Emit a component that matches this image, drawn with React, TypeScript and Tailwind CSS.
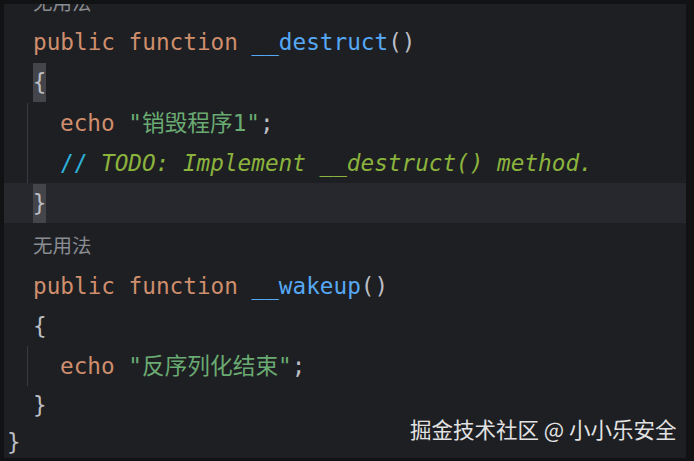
const mono = "font-['DejaVu_Sans_Mono','Liberation_Mono','Noto_Sans_CJK_SC',monospace]";

type Tok = { t: string; c: string };

const K = "text-[#cf8e6d]";
const F = "text-[#56a8f5]";
const P = "text-[#bcbec4]";
const S = "text-[#6aab73]";

const Hint = ({ text }: { text: string }) => (
  <span className="font-['Noto_Sans_CJK_SC',sans-serif] text-[19.5px] text-[#8a8d93]">{text}</span>
);

const Code = ({ toks }: { toks: Tok[] }) => (
  <span className={`${mono} text-[22.7px] whitespace-pre`}>
    {toks.map((tk, i) => (
      <span key={i} className={tk.c}>
        {tk.t}
      </span>
    ))}
  </span>
);

const BraceBox = ({ ch }: { ch: string }) => (
  <span className={`${mono} text-[22.7px] text-[#bcbec4] bg-[#43454a] w-[13px] h-[39px] flex items-center justify-center`}>
    {ch}
  </span>
);

const App = () => {
  return (
    <div className="w-[694px] h-[461px] bg-[#111214] pt-[4px] pl-[4px] pr-[8px] pb-[3px] overflow-hidden">
      <div className="relative w-full h-full bg-[#1e1f22] overflow-hidden">
        <div className="flex flex-col -mt-[22px]">
          {/* line 0: inlay hint, cut off at top like the editor scroll */}
          <div className="h-[40px] flex items-center pl-[29px]">
            <Hint text="无用法" />
          </div>
          <div className="h-[40px] flex items-center pl-[29px]">
            <Code
              toks={[
                { t: "public function ", c: K },
                { t: "__destruct", c: F },
                { t: "()", c: P },
              ]}
            />
          </div>
          <div className="h-[40px] flex items-center pl-[29px]">
            <BraceBox ch="{" />
          </div>
          <div className="h-[81px] flex">
            <div className="w-[24px] border-r border-[#393b40] mt-[1px]" />
            <div className="flex flex-col pl-[32px]">
              <div className="h-[42px] flex items-center">
                <Code
                  toks={[
                    { t: "echo ", c: K },
                    { t: '"销毁程序1"', c: S },
                    { t: ";", c: P },
                  ]}
                />
              </div>
              <div className="h-[39px] flex items-center">
                <Code
                  toks={[
                    { t: "// ", c: "text-[#2cb3dc]" },
                    { t: "TODO: Implement __destruct() method.", c: "text-[#8bb33d] italic" },
                  ]}
                />
              </div>
            </div>
          </div>
          <div className="h-[40px] flex items-center pl-[29px] bg-[#26282e]">
            <BraceBox ch="}" />
          </div>
          <div className="h-[43px] flex items-center pl-[29px]">
            <Hint text="无用法" />
          </div>
          <div className="h-[40px] flex items-center pl-[29px]">
            <Code
              toks={[
                { t: "public function ", c: K },
                { t: "__wakeup", c: F },
                { t: "()", c: P },
              ]}
            />
          </div>
          <div className="h-[40px] flex items-center pl-[29px]">
            <Code toks={[{ t: "{", c: P }]} />
          </div>
          <div className="h-[40px] flex">
            <div className="w-[24px] border-r border-[#393b40]" />
            <div className="flex items-center pl-[32px]">
              <Code
                toks={[
                  { t: "echo ", c: K },
                  { t: '"反序列化结束"', c: S },
                  { t: ";", c: P },
                ]}
              />
            </div>
          </div>
          <div className="h-[38px] flex items-center pl-[29px]">
            <Code toks={[{ t: "}", c: P }]} />
          </div>
          <div className="h-[36px] flex items-center pl-[3px]">
            <Code toks={[{ t: "}", c: P }]} />
          </div>
        </div>

        {/* watermark */}
        <div className="absolute left-[406px] top-[414px] font-['Noto_Sans_CJK_SC',sans-serif] text-[21.5px] text-[#e2e2e2] leading-none">
          掘金技术社区 @ 小小乐安全
        </div>
      </div>
    </div>
  );
};

export default App;
